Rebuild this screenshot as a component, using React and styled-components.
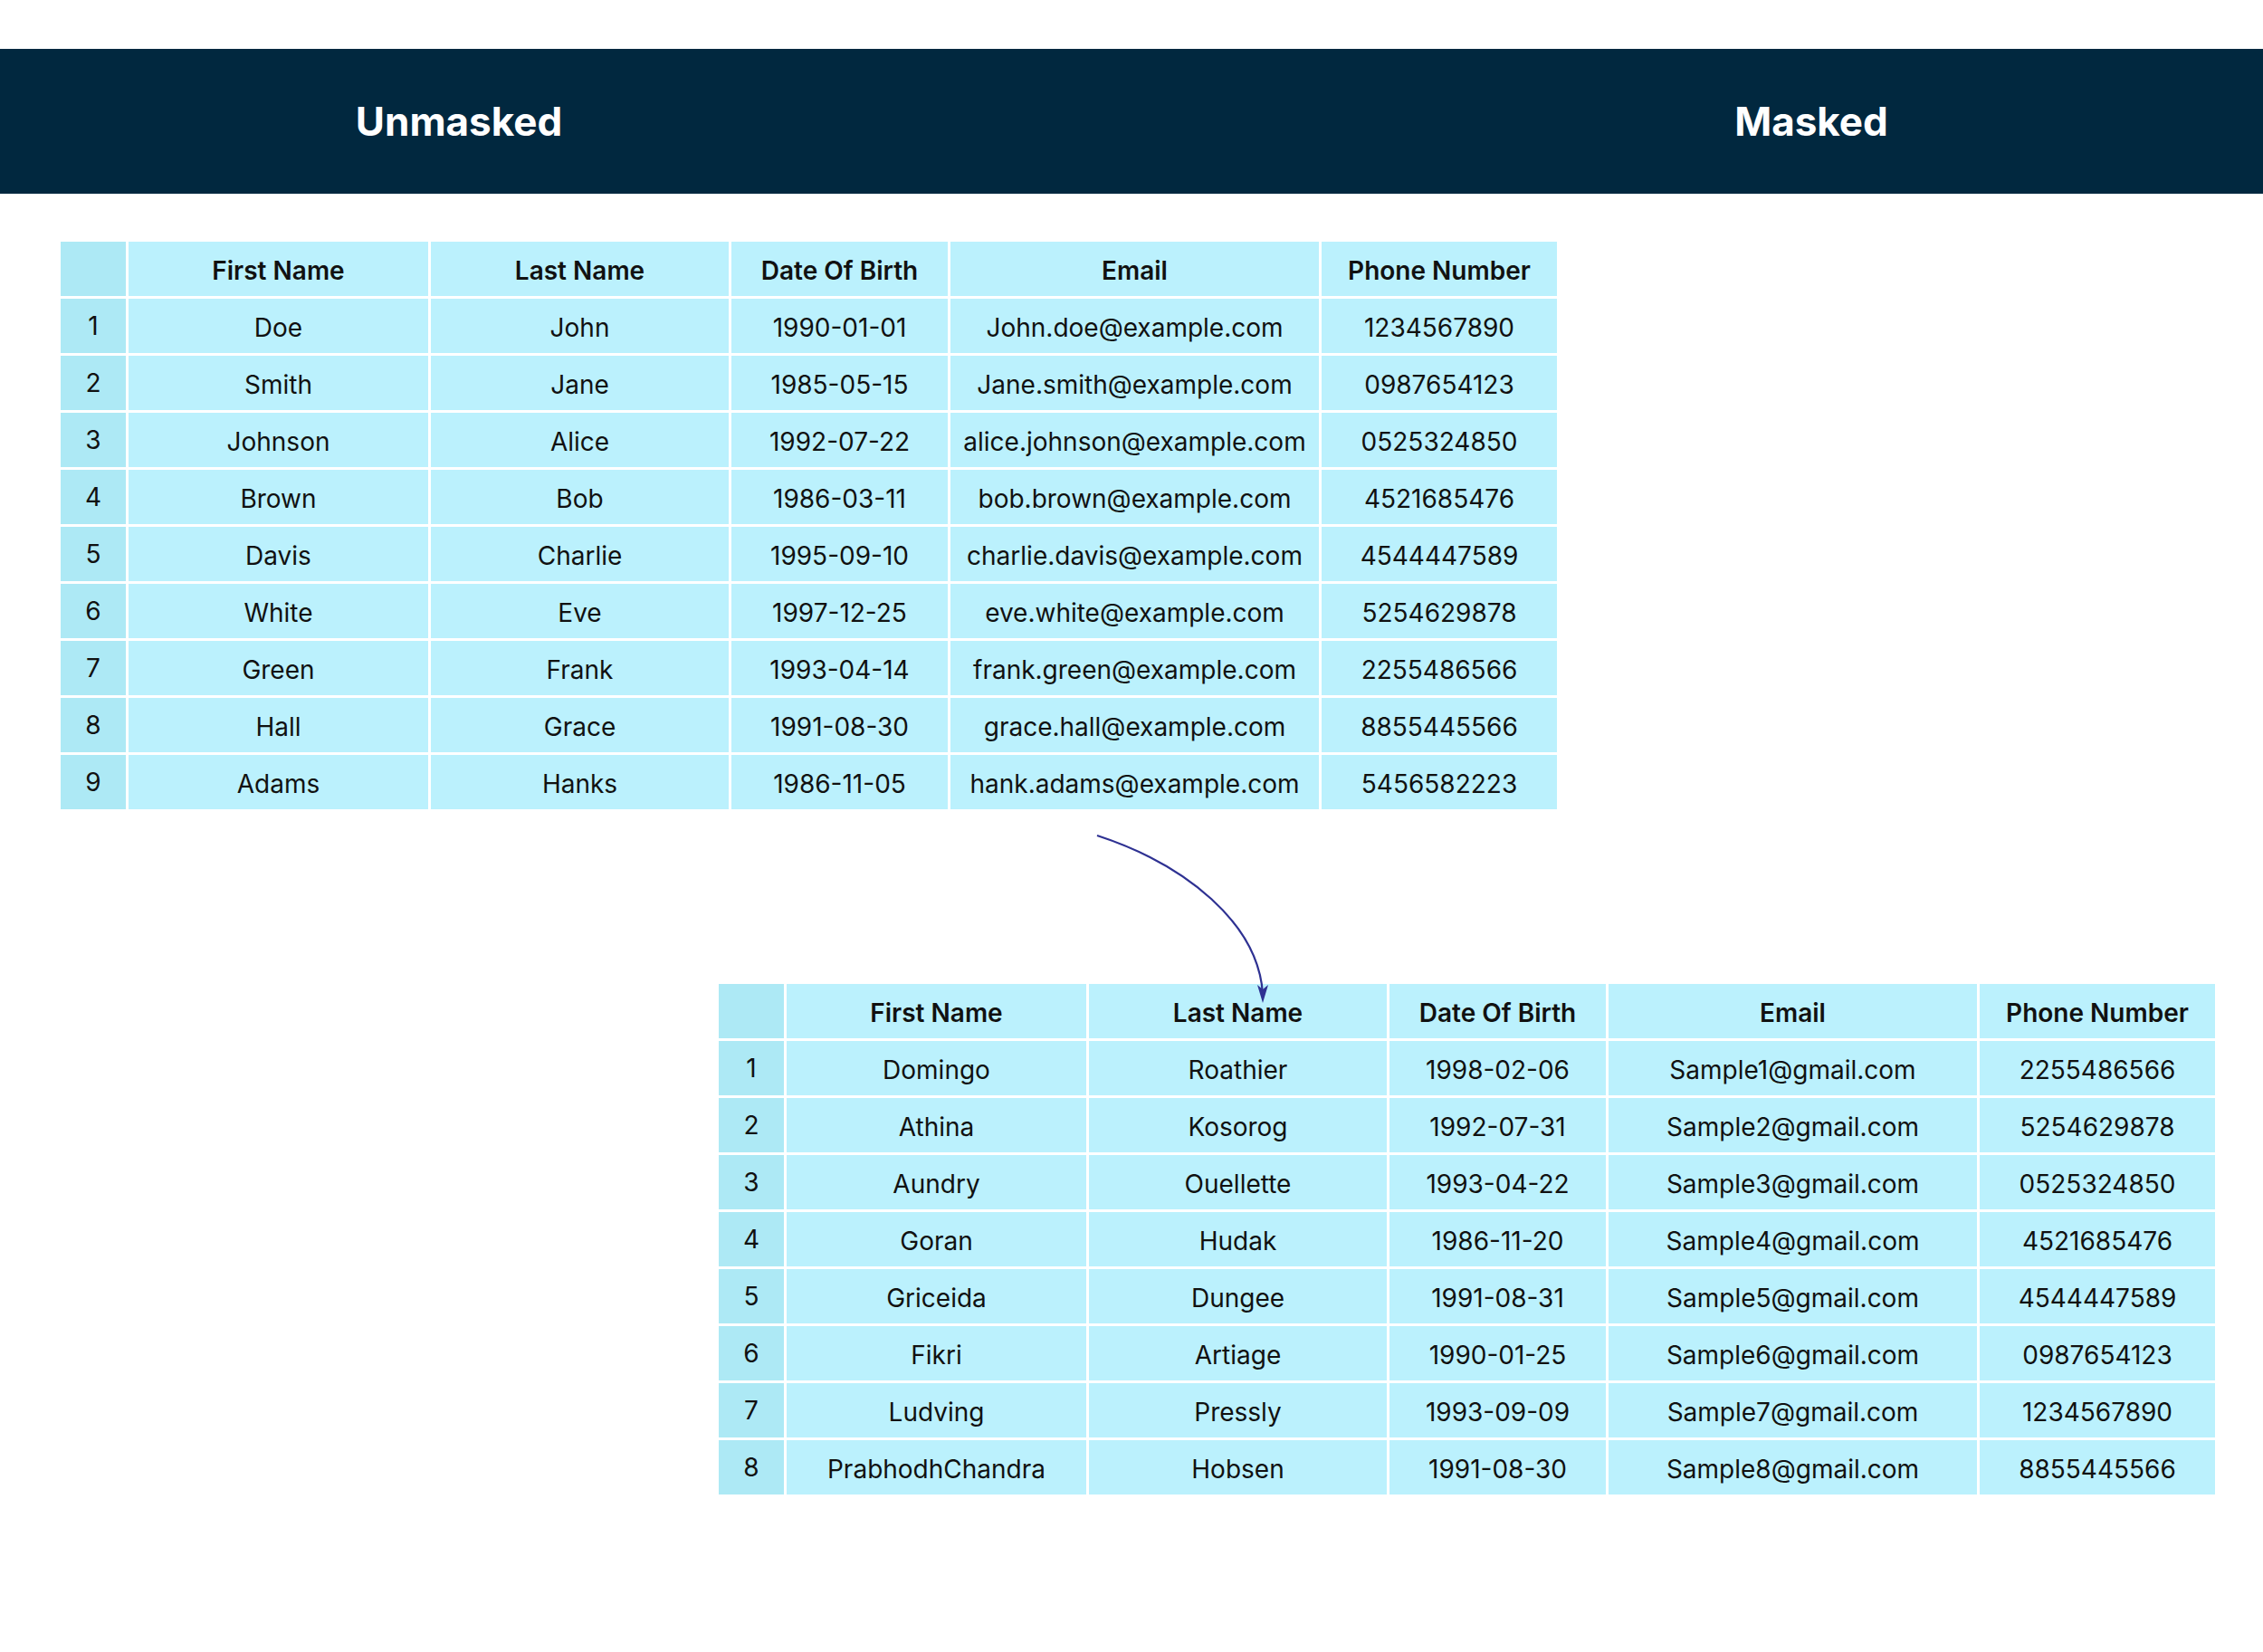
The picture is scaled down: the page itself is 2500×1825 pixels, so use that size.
import styled, { createGlobalStyle } from "styled-components";

const unmasked = [
  ["Doe", "John", "1990-01-01", "John.doe@example.com", "1234567890"],
  ["Smith", "Jane", "1985-05-15", "Jane.smith@example.com", "0987654123"],
  ["Johnson", "Alice", "1992-07-22", "alice.johnson@example.com", "0525324850"],
  ["Brown", "Bob", "1986-03-11", "bob.brown@example.com", "4521685476"],
  ["Davis", "Charlie", "1995-09-10", "charlie.davis@example.com", "4544447589"],
  ["White", "Eve", "1997-12-25", "eve.white@example.com", "5254629878"],
  ["Green", "Frank", "1993-04-14", "frank.green@example.com", "2255486566"],
  ["Hall", "Grace", "1991-08-30", "grace.hall@example.com", "8855445566"],
  ["Adams", "Hanks", "1986-11-05", "hank.adams@example.com", "5456582223"],
];

const masked = [
  ["Domingo", "Roathier", "1998-02-06", "Sample1@gmail.com", "2255486566"],
  ["Athina", "Kosorog", "1992-07-31", "Sample2@gmail.com", "5254629878"],
  ["Aundry", "Ouellette", "1993-04-22", "Sample3@gmail.com", "0525324850"],
  ["Goran", "Hudak", "1986-11-20", "Sample4@gmail.com", "4521685476"],
  ["Griceida", "Dungee", "1991-08-31", "Sample5@gmail.com", "4544447589"],
  ["Fikri", "Artiage", "1990-01-25", "Sample6@gmail.com", "0987654123"],
  ["Ludving", "Pressly", "1993-09-09", "Sample7@gmail.com", "1234567890"],
  ["PrabhodhChandra", "Hobsen", "1991-08-30", "Sample8@gmail.com", "8855445566"],
];

const headers = ["First Name", "Last Name", "Date Of Birth", "Email", "Phone Number"];
const widths = [75, 334, 332, 242, 410, 263];

function DataTable({ rows, offset }) {
  return (
    <Table $offset={offset}>
      <colgroup>
        {widths.map((w, i) => (
          <col key={i} style={{ width: w }} />
        ))}
      </colgroup>
      <thead>
        <tr>
          <IndexCell as="th" />
          {headers.map((h) => (
            <HeadCell key={h}>{h}</HeadCell>
          ))}
        </tr>
      </thead>
      <tbody>
        {rows.map((row, i) => (
          <tr key={i}>
            <IndexCell>{i + 1}</IndexCell>
            {row.map((v, j) => (
              <Cell key={j}>{v}</Cell>
            ))}
          </tr>
        ))}
      </tbody>
    </Table>
  );
}

export default function App() {
  return (
    <Page>
      <GlobalStyle />
      <Banner>
        <BannerTitle>Unmasked</BannerTitle>
        <span />
        <BannerTitle>Masked</BannerTitle>
      </Banner>
      <DataTable rows={unmasked} offset={64} />
      <Spacer />
      <DataTable rows={masked} offset={791} />
      <Arrow width="2500" height="1825" viewBox="0 0 2500 1825">
        <path d="M1212 923 C1310 955 1390 1020 1395 1098" fill="none" stroke="#2e3192" strokeWidth="2.2" />
        <path d="M1389 1088 L1395 1108 L1401 1088 L1395 1093 Z" fill="#2e3192" />
      </Arrow>
    </Page>
  );
}

const GlobalStyle = createGlobalStyle`
  body {
    margin: 0;
    background: #ffffff;
    font-family: "Inter", "Noto Sans", sans-serif;
  }
`;

const Page = styled.div`
  position: relative;
  width: 2500px;
  height: 1825px;
  padding-top: 54px;
  box-sizing: border-box;
`;

const Banner = styled.div`
  display: grid;
  grid-template-columns: 1014px 1fr 998px;
  align-items: center;
  height: 160px;
  background: #01283f;
  margin-bottom: 50px;
`;

const BannerTitle = styled.h1`
  margin: 0;
  text-align: center;
  color: #ffffff;
  font-size: 44px;
  font-weight: 700;
`;

const Table = styled.table`
  margin-left: ${(p) => p.$offset}px;
  border-collapse: collapse;
  table-layout: fixed;
  width: ${widths.reduce((a, b) => a + b, 0)}px;
  color: #111;
  font-size: 28px;
`;

const HeadCell = styled.th`
  height: 63px;
  padding: 4px 0 0;
  box-sizing: border-box;
  background: #bbf1fd;
  border: 3px solid #ffffff;
  font-weight: 600;
  text-align: center;
`;

const Cell = styled.td`
  height: 63px;
  padding: 4px 0 0;
  box-sizing: border-box;
  background: #bbf1fd;
  border: 3px solid #ffffff;
  text-align: center;
  white-space: nowrap;
`;

const IndexCell = styled.td`
  height: 63px;
  padding: 0;
  box-sizing: border-box;
  background: #ade9f5;
  border: 3px solid #ffffff;
  text-align: center;
  font-weight: 400;
`;

const Spacer = styled.div`
  height: 187px;
`;

const Arrow = styled.svg`
  position: absolute;
  left: 0;
  top: 0;
  pointer-events: none;
`;
